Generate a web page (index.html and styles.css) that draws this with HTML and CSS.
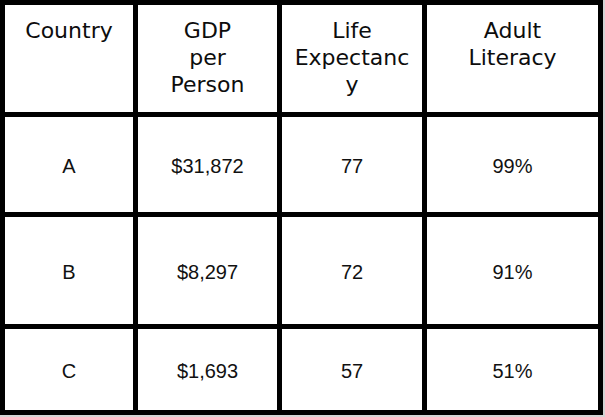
FILE: index.html
```html
<!DOCTYPE html>
<html lang="en">
<head>
<meta charset="utf-8">
<title>Country comparison</title>
<link rel="stylesheet" href="styles.css">
</head>
<body>
<table class="data-table">
  <colgroup>
    <col class="col-country">
    <col class="col-gdp">
    <col class="col-life">
    <col class="col-literacy">
  </colgroup>
  <thead>
    <tr class="row-head">
      <th>Country</th>
      <th>GDP<br>per<br>Person</th>
      <th>Life Expectancy</th>
      <th>Adult<br>Literacy</th>
    </tr>
  </thead>
  <tbody>
    <tr class="row-a">
      <td>A</td>
      <td>$31,872</td>
      <td>77</td>
      <td>99%</td>
    </tr>
    <tr class="row-b">
      <td>B</td>
      <td>$8,297</td>
      <td>72</td>
      <td>91%</td>
    </tr>
    <tr class="row-c">
      <td>C</td>
      <td>$1,693</td>
      <td>57</td>
      <td>51%</td>
    </tr>
  </tbody>
</table>
</body>
</html>
```

FILE: styles.css
```css
html, body {
  margin: 0;
  padding: 0;
}

body {
  background: #d4d4d4;
  width: 605px;
  height: 417px;
  overflow: hidden;
}

.data-table {
  table-layout: fixed;
  width: 603px;
  border-collapse: separate;
  border-spacing: 5px;
  background: #000;
}

.col-country { width: 128px; }
.col-gdp { width: 139px; }
.col-life { width: 140px; }
.col-literacy { width: 171px; }

.data-table th,
.data-table td {
  background: #fff;
  text-align: center;
  padding: 0 10px;
  box-sizing: border-box;
}

.data-table th {
  vertical-align: top;
  padding-top: 12px;
  font-family: "DejaVu Sans", sans-serif;
  font-weight: normal;
  font-size: 22px;
  line-height: 27px;
  color: #0d0d0d;
  overflow-wrap: anywhere;
}

.data-table td {
  vertical-align: middle;
  padding-top: 3px;
  font-family: "Liberation Sans", Arial, sans-serif;
  font-size: 20px;
  color: #111;
}

.row-head { height: 107px; }
.row-a { height: 95px; }
.row-b { height: 107px; }
.row-c { height: 81px; }
```
